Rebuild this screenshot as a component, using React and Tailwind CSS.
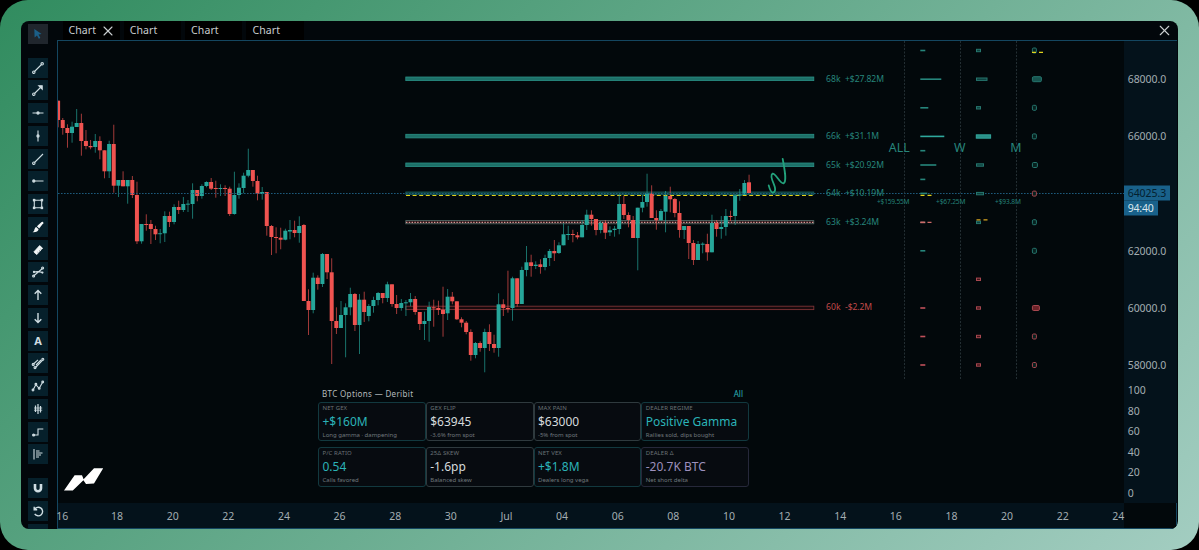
import React from 'react';
import { X } from 'lucide-react';

const UP = '#26a69a';
const DOWN = '#ef5350';
const STEP = 4.637;

// [direction, body top, body bottom, high, low]
const CANDLES = [
  [0, 100.7, 120, 100.7, 127.3], [0, 120, 128, 118, 134.7], [0, 128, 133, 124.3, 147.7],
  [1, 126.7, 133, 121.7, 142.7], [1, 123, 127, 109, 127], [0, 123, 141, 113.7, 155.7],
  [0, 141, 146, 130, 149.3], [0, 146, 147.3, 140, 149.3], [1, 141, 147, 134, 152.7],
  [0, 141, 150.3, 136.3, 159.3], [0, 150.3, 171.3, 150.3, 178.3], [1, 144, 171.3, 140.7, 178],
  [0, 144, 185.7, 124.7, 192.7], [1, 180, 185.7, 180, 197], [0, 180, 186.3, 171.3, 186.3],
  [1, 180, 186.3, 180, 203.7], [0, 180, 195, 176, 198], [0, 195, 241.3, 181.7, 244],
  [1, 224, 241.3, 224, 243.7], [0, 224, 225, 214.3, 230.7], [0, 224, 229, 220, 244],
  [0, 229, 234.3, 225.7, 240], [1, 233.3, 234.2, 229, 243.3], [1, 216, 233.3, 211.3, 242],
  [0, 216, 222, 211.7, 227], [1, 207, 222, 204.3, 224.3], [0, 207, 210, 200.7, 214],
  [1, 204, 210, 197, 212], [1, 203.7, 204.5, 200, 212], [1, 190, 204, 183.3, 218.7],
  [0, 190, 196, 190, 201.3], [1, 186, 196, 184.3, 198.7], [1, 182, 186, 181.3, 187.3],
  [0, 182, 188.7, 178, 190], [0, 188, 189, 180.7, 197.7], [1, 188, 189, 184.3, 196],
  [0, 188, 189, 185.3, 196], [0, 188.7, 214, 186.7, 216], [1, 195, 214, 171.7, 214.7],
  [1, 187.7, 195, 183.3, 198.7], [1, 175.7, 188, 172.7, 193.3], [1, 170, 175.7, 148.7, 177.3],
  [0, 170, 181, 170, 186.7], [0, 181, 193.7, 175.7, 200.3], [1, 192, 194, 187, 199.7],
  [0, 192, 226, 192, 235.7], [0, 226, 237, 225, 255], [0, 237, 238, 227.3, 253.3],
  [0, 237.7, 239.7, 227.7, 249.3], [1, 230.7, 239.7, 228.7, 240.3], [1, 230, 231.5, 220, 239.3],
  [0, 230, 233, 220.7, 237.3], [1, 226, 233, 216.3, 242.7], [0, 225, 301, 224, 301],
  [0, 301, 310, 289.3, 335], [1, 277.7, 310, 272.7, 313.3], [0, 277.7, 284, 275.3, 289.7],
  [1, 254, 284, 253, 287], [0, 254, 272.3, 254, 279], [0, 272.3, 321, 258.3, 364],
  [0, 321, 328, 307.3, 334], [1, 315, 328, 301, 328], [1, 307.3, 315, 303.3, 357.3],
  [1, 294, 307.3, 287.7, 315.3], [0, 294, 325, 293, 331], [1, 299.7, 325, 294, 354],
  [0, 299.7, 312, 291.7, 322], [1, 306, 316, 304, 321.3], [1, 300, 306, 296.7, 312.7],
  [1, 293, 300, 292, 305.3], [0, 293, 298, 293, 303.3], [1, 284.3, 298, 281.7, 302],
  [0, 284.3, 304, 284.3, 306.7], [0, 304, 308, 295, 314], [1, 303, 308, 299, 310.7],
  [1, 302.3, 303.3, 300, 316], [1, 299, 302.3, 293, 306.3], [0, 299, 312, 296, 314.7],
  [0, 312, 324, 312, 330], [1, 321, 324, 311.7, 340], [1, 307, 321, 301.7, 341.7],
  [0, 307.3, 308.3, 299.7, 326.7], [0, 308, 310, 300.7, 315], [0, 309.7, 314, 286.7, 336.7],
  [1, 296.7, 313.3, 289, 320], [0, 296.7, 301.3, 292, 304.3], [0, 301.3, 319.3, 301.3, 320],
  [0, 319.3, 322.7, 317.3, 327.3], [0, 322.7, 332, 321, 334.3], [0, 332, 355, 329.3, 360.7],
  [1, 343, 355, 342, 358.3], [0, 343, 348, 341.3, 351.7], [1, 332, 348, 328.7, 372.3],
  [0, 332, 344, 324.3, 351], [0, 344, 348, 334.7, 352.7], [1, 304.3, 348, 293.3, 356.7],
  [0, 304.3, 308, 299.3, 316], [0, 308, 309, 270.7, 312.7], [1, 278.3, 308, 276.7, 320.7],
  [0, 278.3, 304, 278.3, 306.7], [1, 270, 304, 266.7, 304], [1, 262.3, 270, 246, 276.3],
  [0, 262.3, 266, 254.7, 276.7], [1, 264.7, 266, 261.3, 269], [0, 264.3, 267, 259.3, 273.7],
  [1, 258, 267, 254.7, 270.3], [1, 251, 258, 249, 266], [0, 251, 253.3, 240, 261],
  [1, 245.3, 253, 242.3, 254], [1, 234.3, 245.3, 223.3, 245.3], [1, 234, 235, 225.7, 240],
  [0, 234, 235, 229.7, 242.3], [0, 235.3, 237.3, 232, 239.3], [1, 225, 237.3, 220, 237.3],
  [1, 214.7, 225, 209.7, 230], [0, 214.7, 219, 210.3, 225.7], [0, 219, 230, 219, 235.3],
  [1, 223, 230, 221, 233.3], [0, 223, 232.7, 220, 239], [1, 230.3, 232.3, 226.3, 236],
  [1, 228.7, 230, 226, 236.7], [1, 204, 229, 194.3, 234.3], [0, 204, 215, 196, 219],
  [0, 215, 220, 212.3, 227.3], [0, 220, 238, 216, 238], [1, 207.7, 238, 207.7, 270.3],
  [1, 202, 207.7, 195, 212.3], [1, 193.3, 202, 173.7, 206.7], [0, 193.3, 218, 185.3, 218],
  [0, 218, 220.3, 210.3, 229.7], [1, 211, 220.3, 209, 220.3], [1, 196, 211.7, 191, 232.3],
  [0, 196, 199.3, 186.7, 212.3], [0, 199, 213, 198, 217.3], [0, 213, 230, 201.3, 237.7],
  [1, 226, 230, 226, 239], [0, 226, 243, 226, 259], [0, 243, 260, 240, 265],
  [1, 244, 260, 241, 260], [1, 243.7, 244.7, 242.3, 253.3], [0, 244, 252.3, 233.7, 260.7],
  [1, 223, 252.3, 214.7, 252.3], [0, 223, 229, 220, 236.7], [1, 227, 229, 216, 238.7],
  [1, 216, 227, 209, 235.7], [0, 216, 217, 210.7, 221], [1, 195.3, 216, 194.3, 225],
  [1, 194.7, 195.7, 189, 200.7], [1, 183, 194.7, 180, 194.7], [0, 182.3, 193, 174.7, 193],
];

const LEVEL_LABELS = [
  { y: 79, strike: '68k', value: '+$27.82M', width: 39, color: '#26857b' },
  { y: 136, strike: '66k', value: '+$31.1M', width: 34, color: '#26857b' },
  { y: 164.5, strike: '65k', value: '+$20.92M', width: 39, color: '#26857b' },
  { y: 193.3, strike: '64k', value: '+$10.19M', width: 39, color: '#26857b' },
  { y: 221.5, strike: '63k', value: '+$3.24M', width: 34, color: '#26857b' },
  { y: 307.3, strike: '60k', value: '-$2.2M', width: 27, color: '#c04a4a' },
];

// thin strike bars in the first profile column: [y, width, colour]
const ALL_BARS = [
  [50.5, 5, '#26857b'], [79.2, 21, '#26857b'], [107.8, 8, '#26857b'], [136.4, 24, '#2fa99d'],
  [150.7, 5, '#26857b'], [165, 16, '#26857b'], [179.4, 5, '#26857b'], [193.4, 7, '#26857b'],
  [222.4, 5, '#c98080'], [250.8, 5, '#26857b'], [308, 5, '#c0505a'], [336.5, 5, '#c0505a'],
  [365, 5, '#c0505a'],
];

const WEEK_BARS = [
  [50.5, 4, 1], [79.2, 10.5, 1], [107.8, 4, 1], [165, 7, 1], [193.6, 7, 1],
  [222.4, 4, 1], [279.3, 4, 0], [308, 4, 0], [336.5, 4, 0], [365, 4, 0],
];

const MONTH_BARS = [
  [50.5, 4, 1], [79.2, 9, 1], [107.8, 4, 1], [136.4, 4, 1], [165, 5, 1], [193.6, 4, 0],
  [222.2, 4, 1], [250.8, 4, 1], [308, 7, 0], [336.5, 4, 0], [365, 4, 0],
];

const CARDS = [
  { label: 'NET GEX', value: '+$160M', note: 'Long gamma · dampening', tone: 'text-[#2bb3b8]', border: 'border-[#12393f]' },
  { label: 'GEX FLIP', value: '$63945', note: '-3.6% from spot', tone: 'text-[#d5dadc]', border: 'border-[#2f3a3e]' },
  { label: 'MAX PAIN', value: '$63000', note: '-5% from spot', tone: 'text-[#d5dadc]', border: 'border-[#2f3a3e]' },
  { label: 'DEALER REGIME', value: 'Positive Gamma', note: 'Rallies sold, dips bought', tone: 'text-[#2bb3b8]', border: 'border-[#12393f]' },
  { label: 'P/C RATIO', value: '0.54', note: 'Calls favored', tone: 'text-[#2bb3b8]', border: 'border-[#12393f]' },
  { label: '25Δ SKEW', value: '-1.6pp', note: 'Balanced skew', tone: 'text-[#d5dadc]', border: 'border-[#2f3a3e]' },
  { label: 'NET VEX', value: '+$1.8M', note: 'Dealers long vega', tone: 'text-[#2bb3b8]', border: 'border-[#12393f]' },
  { label: 'DEALER Δ', value: '-20.7K BTC', note: 'Net short delta', tone: 'text-[#9d90bd]', border: 'border-[#26283a]' },
];

const PRICE_TICKS = [
  ['68000.0', 79], ['66000.0', 136], ['62000.0', 250.5], ['60000.0', 308], ['58000.0', 365],
  ['100', 390], ['80', 410.5], ['60', 431], ['40', 451.5], ['20', 472], ['0', 492.5],
];

const TIME_TICKS = [
  '16', '18', '20', '22', '24', '26', '28', '30', 'Jul', '04',
  '06', '08', '10', '12', '14', '16', '18', '20', '22', '24',
];

const TOOLS = [
  // trend line
  <><path d="M4.5 11.5 11.5 4.5" /><circle cx="3.8" cy="12.2" r="1.2" /><circle cx="12.2" cy="3.8" r="1.2" /></>,
  // arrow line
  <><path d="M4.5 11.5 11.5 4.5" /><circle cx="3.8" cy="12.2" r="1.2" /><path d="M8.8 3.8h3.4v3.4z" fill="currentColor" /></>,
  // horizontal line
  <><path d="M2.5 8h11" /><circle cx="8" cy="8" r="1.1" fill="currentColor" /></>,
  // vertical line
  <><path d="M8 2.5v11" /><circle cx="8" cy="8" r="1.1" fill="currentColor" /></>,
  // ray
  <><path d="M4.5 11.5 13 3" /><circle cx="3.8" cy="12.2" r="1.2" /></>,
  // horizontal ray
  <><path d="M4 8h9.5" /><circle cx="3.8" cy="8" r="1.1" fill="currentColor" /></>,
  // rectangle
  <><path d="M4.3 4.3h7.4v7.4H4.3z" /><path d="M3 3h2.2v2.2H3zM10.8 3H13v2.2h-2.2zM3 10.8h2.2V13H3zM10.8 10.8H13V13h-2.2z" fill="currentColor" strokeWidth="0.3" /></>,
  // brush
  <g stroke="none" fill="#f2f6f7"><path d="M6.9 7.3 11.6 3q2-.8 1.7 1.2L9.2 9.6z" /><path d="M6.2 8 8.6 10.3q-.6 3.2-6 2.9 1.9-1.1 1.9-3 .4-1.6 1.7-2.2z" /></g>,
  // ruler
  <><path d="M3.8 10 9.6 3.6l3 2.6-5.8 6.4z" fill="#f2f6f7" stroke="#f2f6f7" strokeWidth="0.8" strokeLinejoin="round" /><path d="m10.6 7 .9.8M9.1 8.6l.9.8M7.6 10.2l.9.8" stroke="#06202b" strokeWidth="0.6" /></>,
  // scissors line
  <><path d="M3.5 12 12.5 4.5M4 8q4-1 8.5.6" /><circle cx="3.6" cy="12" r="1" /><circle cx="12.6" cy="4" r="1" /><circle cx="4" cy="8" r=".6" /><circle cx="12.4" cy="8.6" r=".6" /></>,
  // up arrow
  <path d="M8 13V3.5M4.7 6.8 8 3.5l3.3 3.3" strokeWidth="1.4" />,
  // down arrow
  <path d="M8 3v9.5M4.7 9.2 8 12.5l3.3-3.3" strokeWidth="1.4" />,
  // text
  'A',
  // parallel channel
  <><path d="M3.5 9 8 4.8M5.5 12.5 12.7 5" /><circle cx="3.2" cy="9.4" r="1" /><circle cx="5" cy="12.6" r="1" /><circle cx="12.8" cy="4.2" r="1" /><path d="m6 10 5-5" /></>,
  // wave
  <><path d="m3.2 11.7 2.6-5 3.4 3.6 3.4-6" /><circle cx="3" cy="12" r=".9" /><circle cx="5.9" cy="6.3" r=".9" /><circle cx="9.2" cy="10.4" r=".9" /><circle cx="12.7" cy="4" r=".9" /></>,
  // bars
  <><path d="M5.5 4.5v6.5M8 3v10M10.5 5v6.5" strokeWidth="1.2" /><path d="M4 7h8.2M4 9.2h8.2" strokeWidth="0.8" /></>,
  // step
  <><path d="M4 11h4V5h5.3" /><circle cx="3.6" cy="11" r="1" fill="currentColor" /></>,
  // profile
  <path d="M4 3v10.5M6 5h3.5M6 7h6.5M6 9h5M6 11h3" />,
];

const MAGNET = <path d="M5 4v4.2a3 3 0 0 0 6 0V4" strokeWidth="2.6" />;
const UNDO = <path d="M4.2 3.8v3h3M4.5 6.5a4.3 4.3 0 1 1 .2 4.4" strokeWidth="1.4" />;

function ToolButton({ icon }) {
  return (
    <button className="flex h-5 w-5 shrink-0 items-center justify-center bg-[#06202b] text-[#cfdde2]">
      {icon === 'A' ? (
        <span className="text-[11px] leading-none font-bold">A</span>
      ) : (
        <svg viewBox="0 0 16 16" className="h-4 w-4" fill="none" stroke="currentColor" strokeWidth="1.1">
          {icon}
        </svg>
      )}
    </button>
  );
}

function Toolbar() {
  return (
    <aside className="flex w-9 shrink-0 flex-col overflow-hidden pt-[3px] pl-[7px]">
      <button className="flex h-5 w-5 shrink-0 items-center justify-center bg-[#20262d]">
        <svg viewBox="0 0 16 16" className="h-4 w-4" fill="#1b5f88">
          <path d="M4.3 3 11.6 7.9 8.5 8.6 10.4 12 8.8 12.8 7 9.5 4.6 11.6z" />
        </svg>
      </button>
      <div className="mt-[14px] flex flex-col gap-[2.75px]">
        {TOOLS.map((icon, index) => (
          <ToolButton key={index} icon={icon} />
        ))}
      </div>
      <div className="mt-[14px] flex flex-col gap-[3px]">
        <ToolButton icon={MAGNET} />
        <ToolButton icon={UNDO} />
        <ToolButton icon={null} />
      </div>
    </aside>
  );
}

function TabBar() {
  return (
    <header className="flex h-[19px] shrink-0 items-center pr-[5px] text-[10.5px] tracking-[0.1px] text-[#c9cdcf]">
      <div className="flex flex-1 gap-1 pl-[5.5px]">
        {[0, 1, 2, 3].map((tab) => (
          <div key={tab} className="flex h-[19px] w-[57.3px] items-center gap-[3.5px] bg-black pt-px pl-[6px]">
            <span>Chart</span>
            {tab === 0 && <X className="h-4 w-4 shrink-0" strokeWidth={1.6} />}
          </div>
        ))}
      </div>
      <X className="mt-px h-[17px] w-[17px]" strokeWidth={1.6} />
    </header>
  );
}

function Candles() {
  return (
    <g>
      {CANDLES.map(([up, top, bottom, high, low], index) => {
        const x = 58.1 + index * STEP;
        const color = up ? UP : DOWN;
        return (
          <g key={index} fill={color}>
            <rect x={x - 0.4} y={high} width="0.9" height={low - high} opacity="0.75" />
            <rect x={x - 2} y={top} width="4" height={Math.max(bottom - top, 0.9)} />
          </g>
        );
      })}
    </g>
  );
}

function Levels() {
  return (
    <g>
      {[77, 134.3, 163].map((y) => (
        <rect key={y} x="405.8" y={y} width="408" height="3.6" fill="#1d7068" stroke="#2a9086" strokeWidth="0.8" />
      ))}
      <rect x="405.8" y="192" width="408" height="2.6" fill="#0b3a38" stroke="#1c5e5c" strokeWidth="0.8" />
      <path d="M406 195.5H814" stroke="#e3d11a" strokeWidth="1" strokeDasharray="4 2.6" />
      <rect x="405.8" y="220.6" width="408" height="3.2" fill="#2a1519" stroke="#56706c" strokeWidth="0.8" />
      <path d="M406 222.3H814" stroke="#d89a96" strokeWidth="1.2" strokeDasharray="1.4 1.4" />
      <rect x="405.8" y="306.2" width="408" height="3.4" fill="#2a0b0f" fillOpacity="0.6" stroke="#7d3336" strokeWidth="0.9" />
    </g>
  );
}

function Profile() {
  const tint = (up) => (up ? ['#0e3f3c', '#26766e'] : ['#3f1318', '#a84850']);
  return (
    <g>
      {[904.5, 960.5, 1016.5].map((x) => (
        <path key={x} d={`M${x} 41V380`} stroke="#232e33" strokeWidth="1" strokeDasharray="2 1.5" />
      ))}
      {ALL_BARS.map(([y, width, color]) => (
        <rect key={y} x="920.3" y={y - 0.8} width={width} height="1.6" fill={color} />
      ))}
      {WEEK_BARS.map(([y, width, up]) => (
        <rect key={y} x="976.5" y={y - 1.2} width={width} height="2.4" fill={tint(up)[0]} stroke={tint(up)[1]} strokeWidth="1" />
      ))}
      <rect x="976.2" y="134.8" width="14.5" height="3.4" fill="#2a8f87" stroke="#37b3a8" strokeWidth="0.8" />
      {MONTH_BARS.map(([y, width, up]) => (
        <rect key={y} x="1032.4" y={y - 2.5} width={width} height="5" rx="1.2" fill={width > 5 ? (up ? '#17544f' : '#6d2329') : '#07211f'} stroke={tint(up)[1]} strokeWidth="1" />
      ))}
      <g strokeWidth="1.3" strokeDasharray="4 3">
        <path d="M920.5 195.3H932M1032 52.3H1043" stroke="#e0d21c" />
        <path d="M976.5 219.8H988" stroke="#d9a520" />
        <path d="M920.5 222.4H932" stroke="#cf6a68" />
      </g>
      <g fill="#26857b" fontSize="12.4">
        <text x="888.8" y="152.4" textLength="21">ALL</text>
        <text x="954" y="152.4">W</text>
        <text x="1010.2" y="152.4">M</text>
      </g>
      <g fill="#248077" fontSize="6.6">
        <text x="877" y="204.3" textLength="32.5">+$159.55M</text>
        <text x="936" y="204.3" textLength="29.5">+$67.25M</text>
        <text x="995" y="204.3" textLength="26">+$93.8M</text>
      </g>
    </g>
  );
}

function Plot() {
  return (
    <svg viewBox="58 41 1066 462" className="block h-[462px] w-[1066px]" fill="none">
      <Levels />
      <Candles />
      <path d="M58 193.5H1124" stroke="#1d5a7c" strokeWidth="1" strokeDasharray="1.6 1.4" />
      {LEVEL_LABELS.map((level) => (
        <g key={level.strike} fill={level.color} fontSize="8.6">
          <text x="826" y={level.y + 3} textLength="14.5">{level.strike}</text>
          <text x="845" y={level.y + 3} textLength={level.width}>{level.value}</text>
        </g>
      ))}
      <Profile />
      <path
        d="M768.7 185.4C769.5 188.5 770.6 192.6 773 192.7C776.2 191.6 775.2 187.4 774 184.6C772.4 181 769.8 175 772.6 173.6C775.6 172.8 779.6 183.6 783.4 183.4C787.4 181.6 784.2 168 782.7 158.8"
        stroke="#23a27c"
        strokeWidth="1.8"
        strokeLinecap="round"
      />
      <path d="M64 490.6 74.6 475.2H82L83.6 479.3 94 468.2H103.2L94 483.6 86 484 83.4 480.2 72.8 490.6z" fill="#fff" />
    </svg>
  );
}

function OptionsPanel() {
  return (
    <section className="absolute top-[346px] left-[260px] w-[431px]">
      <div className="flex h-[15px] items-center justify-between pr-[6px] pb-px pl-1 text-[8px] leading-none">
        <span className="tracking-[0.35px] text-[#b4babc]">BTC Options — Deribit</span>
        <span className="text-[#2bb3b8]">All</span>
      </div>
      <div className="grid grid-cols-4 gap-y-[6px]">
        {CARDS.map((card) => (
          <div
            key={card.label}
            className={`flex h-[39.5px] flex-col rounded-[3px] border bg-[#070b10] pt-[2px] pl-[3.5px] whitespace-nowrap ${card.border}`}
          >
            <span className="text-[6px] leading-[7px] tracking-[0.1px] text-[#6a7276]">{card.label}</span>
            <span className={`text-[12px] leading-[20px] ${card.tone}`}>{card.value}</span>
            <span className="text-[6px] leading-[7px] text-[#71797d]">{card.note}</span>
          </div>
        ))}
      </div>
    </section>
  );
}

function PriceAxis() {
  return (
    <svg viewBox="1124 41 53 462" className="block h-[462px] w-[53px] bg-[#04121b]" fontSize="10.5">
      {PRICE_TICKS.map(([label, y]) => (
        <text key={label} x="1127.7" y={y + 4} fill="#a3adb2" textLength={label.length === 7 ? 38.5 : undefined}>
          {label}
        </text>
      ))}
      <rect x="1124" y="185.5" width="46" height="15" fill="#19618a" />
      <rect x="1124" y="200.5" width="34" height="15" fill="#19618a" />
      <text x="1127.7" y="197" fill="#04202e" textLength="38.5">64025.3</text>
      <text x="1127.7" y="212" fill="#dce8ee" textLength="26">94:40</text>
    </svg>
  );
}

function TimeAxis() {
  return (
    <svg viewBox="58 503 1066 25" className="block h-[25px] w-[1066px] overflow-visible bg-[#04121b]" fill="#a3adb2" fontSize="10.5">
      {TIME_TICKS.map((label, index) => (
        <text key={index} x={index === 0 ? 62.2 : 61.4 + index * 55.63} y="519.7" textAnchor="middle">
          {label}
        </text>
      ))}
    </svg>
  );
}

export default function App() {
  return (
    <div className="h-[550px] w-[1199px] bg-black font-['Noto_Sans','Open_Sans',sans-serif]">
      <div className="h-full w-full rounded-[28px] bg-[linear-gradient(135deg,#318c5f,#a3cdc1)] px-[21px] pt-[20.5px] pb-[21px]">
        <div className="flex h-full w-[1157px] overflow-hidden rounded-[8px] bg-[#02070b]">
          <Toolbar />
          <div className="flex flex-1 flex-col">
            <TabBar />
            <main className="relative grid w-[1120px] grid-cols-[1066px_52px] border border-[#144660] bg-[#02080b]">
              <Plot />
              <PriceAxis />
              <TimeAxis />
              <OptionsPanel />
            </main>
          </div>
        </div>
      </div>
    </div>
  );
}
